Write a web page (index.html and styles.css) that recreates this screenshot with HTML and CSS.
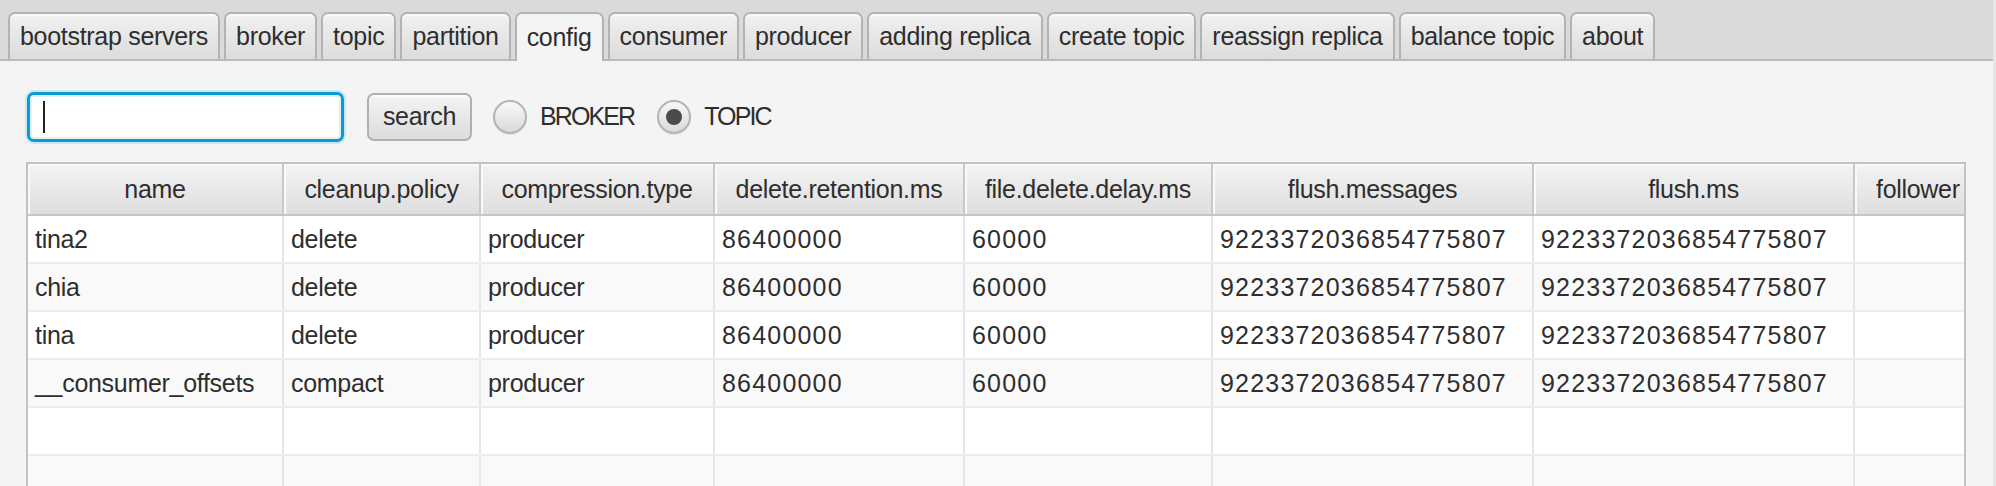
FILE: index.html
```html
<!DOCTYPE html>
<html>
<head>
<meta charset="utf-8">
<link rel="stylesheet" href="styles.css">
</head>
<body>
<div class="app">
  <div class="tabbar">
    <div class="tab">bootstrap servers</div>
    <div class="tab">broker</div>
    <div class="tab">topic</div>
    <div class="tab">partition</div>
    <div class="tab selected">config</div>
    <div class="tab">consumer</div>
    <div class="tab">producer</div>
    <div class="tab">adding replica</div>
    <div class="tab">create topic</div>
    <div class="tab">reassign replica</div>
    <div class="tab">balance topic</div>
    <div class="tab">about</div>
  </div>
  <div class="content">
    <div class="controls">
      <div class="field"><span class="caret"></span></div>
      <div class="button">search</div>
      <div class="radio"><span class="circle"></span><span class="rlabel">BROKER</span></div>
      <div class="radio"><span class="circle on"><span class="dot"></span></span><span class="rlabel">TOPIC</span></div>
    </div>
    <div class="table">
      <div class="row head">
        <div class="hc">name</div>
        <div class="hc">cleanup.policy</div>
        <div class="hc">compression.type</div>
        <div class="hc">delete.retention.ms</div>
        <div class="hc">file.delete.delay.ms</div>
        <div class="hc">flush.messages</div>
        <div class="hc">flush.ms</div>
        <div class="hc last">follower</div>
      </div>
      <div class="row">
        <div class="c">tina2</div><div class="c">delete</div><div class="c">producer</div><div class="c num">86400000</div><div class="c num">60000</div><div class="c num">9223372036854775807</div><div class="c num">9223372036854775807</div><div class="c"></div>
      </div>
      <div class="row alt">
        <div class="c">chia</div><div class="c">delete</div><div class="c">producer</div><div class="c num">86400000</div><div class="c num">60000</div><div class="c num">9223372036854775807</div><div class="c num">9223372036854775807</div><div class="c"></div>
      </div>
      <div class="row">
        <div class="c">tina</div><div class="c">delete</div><div class="c">producer</div><div class="c num">86400000</div><div class="c num">60000</div><div class="c num">9223372036854775807</div><div class="c num">9223372036854775807</div><div class="c"></div>
      </div>
      <div class="row alt">
        <div class="c">__consumer_offsets</div><div class="c">compact</div><div class="c">producer</div><div class="c num">86400000</div><div class="c num">60000</div><div class="c num">9223372036854775807</div><div class="c num">9223372036854775807</div><div class="c"></div>
      </div>
      <div class="row">
        <div class="c"></div><div class="c"></div><div class="c"></div><div class="c"></div><div class="c"></div><div class="c"></div><div class="c"></div><div class="c"></div>
      </div>
      <div class="row alt">
        <div class="c"></div><div class="c"></div><div class="c"></div><div class="c"></div><div class="c"></div><div class="c"></div><div class="c"></div><div class="c"></div>
      </div>
    </div>
  </div>
</div>
</body>
</html>
```

FILE: styles.css
```css
html, body {
  margin: 0;
  padding: 0;
  height: 100%;
  overflow: hidden;
}
body {
  background: #f4f4f4;
  font-family: "Liberation Sans", Arial, sans-serif;
  font-size: 25px;
  letter-spacing: -0.3px;
  color: #2e2e2e;
}
.app {
  height: 486px;
  display: flex;
  flex-direction: column;
  overflow: hidden;
  border-right: 3px solid #e6e6e6;
}
.tabbar {
  height: 59px;
  flex: none;
  background: #dadada;
  border-bottom: 2px solid #bababa;
  display: flex;
  align-items: flex-end;
  padding-left: 8px;
  gap: 4px;
}
.tab {
  height: 47px;
  box-sizing: border-box;
  padding: 0 10px;
  display: flex;
  align-items: center;
  border: 2px solid #b3b3b3;
  border-bottom: none;
  border-radius: 7px 7px 0 0;
  background: linear-gradient(#f1f1f1, #dcdcdc);
  box-shadow: inset 0 2px 0 #fafafa;
  white-space: nowrap;
}
.tab.selected {
  background: #f4f4f4;
  height: 49px;
  margin-bottom: -2px;
  box-shadow: none;
}
.content {
  flex: 1;
  display: flex;
  flex-direction: column;
  padding: 30px 27px 0 26px;
  min-height: 0;
}
.controls {
  display: flex;
  align-items: center;
  height: 51px;
}
.field {
  width: 317px;
  height: 50px;
  box-sizing: border-box;
  margin-left: 1px;
  border: 3px solid #0a9bd3;
  border-radius: 7px;
  background: #ffffff;
  box-shadow: 0 0 0 2px #c9e7f4, inset 0 0 0 2px #e2f1f8;
  display: flex;
  align-items: center;
  padding-left: 13px;
}
.caret {
  width: 2px;
  height: 32px;
  background: #222;
}
.button {
  margin-left: 23px;
  width: 105px;
  height: 48px;
  box-sizing: border-box;
  border: 2px solid #b0b0b0;
  border-radius: 7px;
  background: linear-gradient(#f4f4f4, #dcdcdc);
  box-shadow: inset 0 2px 0 #fbfbfb;
  display: flex;
  align-items: center;
  justify-content: center;
}
.radio {
  display: flex;
  align-items: center;
  margin-left: 21px;
}
.radio + .radio {
  margin-left: 23px;
}
.circle {
  width: 34px;
  height: 34px;
  box-sizing: border-box;
  border-radius: 50%;
  border: 2px solid #b4b4b4;
  background: linear-gradient(#f8f8f8, #dadada);
  box-shadow: 0 1px 1px rgba(0,0,0,0.08);
  display: flex;
  align-items: center;
  justify-content: center;
}
.dot {
  width: 16px;
  height: 16px;
  border-radius: 50%;
  background: #4a4a4a;
}
.rlabel {
  margin-left: 13px;
  letter-spacing: -1.9px;
}
.table {
  margin-top: 20px;
  border: 2px solid #c2c2c2;
  border-bottom: none;
  overflow: hidden;
  flex: 1;
  background: #ffffff;
}
.row {
  display: grid;
  grid-template-columns: 256px 197px 234px 250px 248px 321px 321px 220px;
  height: 48px;
  box-sizing: border-box;
  border-bottom: 2px solid #ececec;
  background: #ffffff;
}
.row.alt {
  background: #f9f9f9;
}
.row.head {
  height: 52px;
  border-bottom: 2px solid #c6c6c6;
  background: linear-gradient(#f3f3f3, #dedede);
}
.hc {
  display: flex;
  align-items: center;
  justify-content: center;
  border-right: 2px solid #c8c8c8;
  box-shadow: inset 2px 2px 0 #f9f9f9;
  white-space: nowrap;
  overflow: hidden;
}
.hc.last {
  justify-content: flex-start;
  padding-left: 21px;
}
.c {
  display: flex;
  align-items: center;
  padding-left: 7px;
  border-right: 2px solid #e6e6e6;
  white-space: nowrap;
  overflow: hidden;
}
.c.num {
  letter-spacing: 1.2px;
}
```
